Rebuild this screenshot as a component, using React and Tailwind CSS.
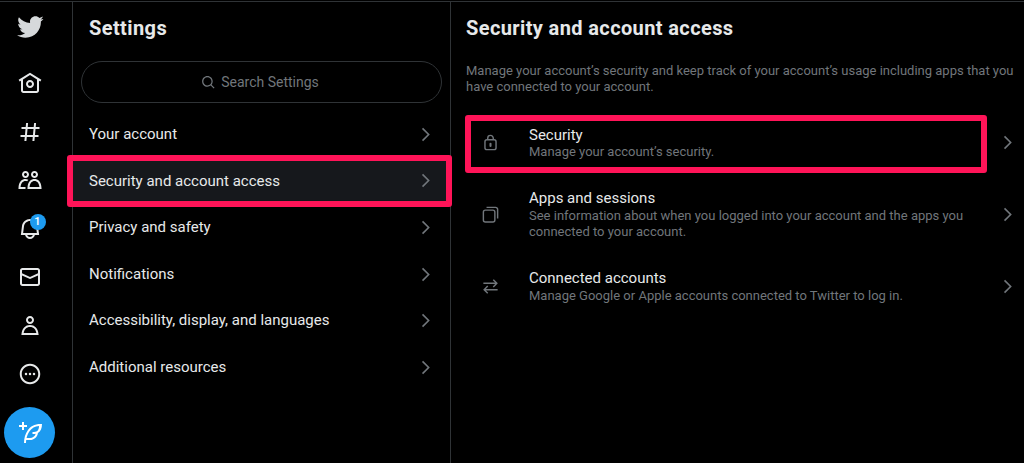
import React from "react";

const font = "font-['Roboto',sans-serif]";

const navIcons = [
  "M12 9c-2.209 0-4 1.791-4 4s1.791 4 4 4 4-1.791 4-4-1.791-4-4-4zm0 6c-1.105 0-2-.895-2-2s.895-2 2-2 2 .895 2 2-.895 2-2 2zm0-13.304L.622 8.807l1.06 1.696L3 9.679V19.5C3 20.881 4.119 22 5.5 22h13c1.381 0 2.5-1.119 2.5-2.5V9.679l1.318.824 1.06-1.696L12 1.696zM19 19.5c0 .276-.224.5-.5.5h-13c-.276 0-.5-.224-.5-.5V8.429l7-4.375 7 4.375V19.5z",
  "M10.09 3.098L9.72 7h5.99l.39-4.089 1.99.189L17.72 7h3.78v2h-3.97l-.56 6h3.53v2h-3.72l-.38 4.089-1.99-.189.36-3.9H8.78l-.38 4.089-1.99-.189L6.77 17H2.5v-2h4.46l.56-6H3.5V7h4.21l.39-4.089 1.99.187zM14.96 15l.56-6H9.53l-.56 6h5.99z",
  "M7.501 19.917L7.471 21H.472l.029-1.027c.184-6.618 3.736-8.977 7-8.977.963 0 1.95.212 2.87.672-.444.478-.851 1.03-1.212 1.656-.507-.204-1.054-.329-1.658-.329-2.767 0-4.57 2.223-4.938 6.004H7.56c-.023.302-.05.599-.059.917zm15.998.056L23.528 21H9.472l.029-1.027c.184-6.618 3.736-8.977 7-8.977s6.816 2.358 7 8.977zM21.437 19c-.367-3.781-2.17-6.004-4.938-6.004s-4.57 2.223-4.938 6.004h9.875zm-4.938-9c-.799 0-1.527-.279-2.116-.73-.836-.64-1.384-1.638-1.384-2.77 0-1.93 1.567-3.5 3.5-3.5s3.5 1.57 3.5 3.5c0 1.132-.548 2.13-1.384 2.77-.589.451-1.317.73-2.116.73zm-1.5-3.5c0 .827.673 1.5 1.5 1.5s1.5-.673 1.5-1.5-.673-1.5-1.5-1.5-1.5.673-1.5 1.5zM7.5 3C9.433 3 11 4.57 11 6.5S9.433 10 7.5 10 4 8.43 4 6.5 5.567 3 7.5 3zm0 2C6.673 5 6 5.673 6 6.5S6.673 8 7.5 8 9 7.327 9 6.5 8.327 5 7.5 5z",
  "M19.993 9.042C19.48 5.017 16.054 2 11.996 2s-7.49 3.021-7.999 7.051L2.866 18H7.1c.463 2.282 2.481 4 4.9 4s4.437-1.718 4.9-4h4.236l-1.143-8.958zM12 20c-1.306 0-2.417-.835-2.829-2h5.658c-.412 1.165-1.523 2-2.829 2zm-6.866-4l.847-6.698C6.364 6.272 8.941 4 11.996 4s5.627 2.268 6.013 5.295L18.864 16H5.134z",
  "M1.998 5.5c0-1.381 1.119-2.5 2.5-2.5h15c1.381 0 2.5 1.119 2.5 2.5v13c0 1.381-1.119 2.5-2.5 2.5h-15c-1.381 0-2.5-1.119-2.5-2.5v-13zm2.5-.5c-.276 0-.5.224-.5.5v2.764l8 3.638 8-3.636V5.5c0-.276-.224-.5-.5-.5h-15zm15.5 5.463l-8 3.636-8-3.638V18.5c0 .276.224.5.5.5h15c.276 0 .5-.224.5-.5v-8.037z",
  "M5.651 19h12.698c-.337-1.8-1.023-3.21-1.945-4.19C15.318 13.65 13.838 13 12 13s-3.317.65-4.404 1.81c-.922.98-1.608 2.39-1.945 4.19zm.486-5.56C7.627 11.85 9.648 11 12 11s4.373.85 5.863 2.44c1.477 1.58 2.366 3.8 2.632 6.46l.11 1.1H3.395l.11-1.1c.266-2.66 1.155-4.88 2.632-6.46zM12 4c-1.105 0-2 .9-2 2s.895 2 2 2 2-.9 2-2-.895-2-2-2zM8 6c0-2.21 1.791-4 4-4s4 1.79 4 4-1.791 4-4 4-4-1.79-4-4z",
  "M1.750 12c0-5.660 4.590-10.250 10.250-10.250S22.250 6.340 22.250 12 17.660 22.250 12 22.250 1.750 17.660 1.750 12zM12 3.750c-4.560 0-8.250 3.690-8.250 8.250s3.690 8.250 8.250 8.250 8.250-3.690 8.250-8.250S16.560 3.750 12 3.750zM6.750 12a1.250 1.250 0 1 0 2.500 0 1.250 1.250 0 1 0-2.500 0zm4 0a1.250 1.250 0 1 0 2.500 0 1.250 1.250 0 1 0-2.500 0zm4 0a1.250 1.250 0 1 0 2.500 0 1.250 1.250 0 1 0-2.500 0z",
];

const menu = [
  "Your account",
  "Security and account access",
  "Privacy and safety",
  "Notifications",
  "Accessibility, display, and languages",
  "Additional resources",
];

function Chevron({ className }) {
  return (
    <svg viewBox="0 0 24 24" className={className} fill="currentColor">
      <path d="M14.586 12L7.543 4.96l1.414-1.42L17.414 12l-8.457 8.46-1.414-1.42L14.586 12z" />
    </svg>
  );
}

function LockIcon() {
  return (
    <svg viewBox="0 0 24 24" className="w-[19px] h-[19px]" fill="none" stroke="currentColor" strokeWidth="1.8">
      <rect x="5" y="8.500" width="14" height="12.500" rx="2.500" />
      <path d="M8.500 8.500V6.500a3.500 3.500 0 0 1 7 0v2" />
      <path d="M12 13.500v3" strokeWidth="2.600" strokeLinecap="round" />
    </svg>
  );
}

function AppsIcon() {
  return (
    <svg viewBox="0 0 24 24" className="w-[19px] h-[19px]" fill="none" stroke="currentColor" strokeWidth="1.8">
      <rect x="3" y="6.500" width="14.500" height="15" rx="2.500" />
      <path d="M7 3h11.500A2.500 2.500 0 0 1 21 5.500V17" />
    </svg>
  );
}

function ArrowsIcon() {
  return (
    <svg viewBox="0 0 24 24" className="w-[19px] h-[19px]" fill="none" stroke="currentColor" strokeWidth="1.8">
      <path d="M3 8h17M15.500 3.500L20 8l-4.500 4.500" />
      <path d="M21 16H4M8.500 11.500L4 16l4.500 4.500" />
    </svg>
  );
}

const options = [
  {
    title: "Security",
    text: "Manage your account’s security.",
    icon: <LockIcon />,
    box: "pt-[10px] pb-[13px]",
    sub: "-mt-px",
  },
  {
    title: "Apps and sessions",
    text: "See information about when you logged into your account and the apps you connected to your account.",
    icon: <AppsIcon />,
    box: "pt-[15px] pb-[13px]",
    sub: "",
  },
  {
    title: "Connected accounts",
    text: "Manage Google or Apple accounts connected to Twitter to log in.",
    icon: <ArrowsIcon />,
    box: "pt-[15px] pb-[12px]",
    sub: "",
  },
];

export default function App() {
  return (
    <div className={`${font} w-[1024px] h-[463px] overflow-hidden bg-black pt-px text-[#e7e9ea]`}>
      <div className="flex h-full border-t border-[#2f3336]">
        <nav className="w-[73px] shrink-0 border-r border-[#2f3336] flex flex-col items-center pr-[13px]">
          <svg viewBox="0 0 24 24" className="w-[28px] h-[28px] mt-[11px] text-[#d6d9db]" fill="currentColor">
            <path d="M23.643 4.937c-.835.37-1.732.62-2.675.727.962-.576 1.7-1.49 2.048-2.578-.9.534-1.897.922-2.958 1.13-.85-.904-2.06-1.47-3.4-1.47-2.572 0-4.658 2.086-4.658 4.66 0 .364.042.718.12 1.06-3.873-.195-7.304-2.05-9.602-4.868-.4.69-.63 1.49-.63 2.342 0 1.616.823 3.043 2.072 3.878-.764-.025-1.482-.234-2.11-.583v.06c0 2.257 1.605 4.14 3.737 4.568-.392.106-.803.162-1.227.162-.3 0-.593-.028-.877-.082.593 1.85 2.313 3.198 4.352 3.234-1.595 1.25-3.604 1.995-5.786 1.995-.376 0-.747-.022-1.112-.065 2.062 1.323 4.51 2.093 7.14 2.093 8.57 0 13.255-7.098 13.255-13.254 0-.2-.005-.402-.014-.602.91-.658 1.7-1.477 2.323-2.41z" />
          </svg>
          <div className="flex flex-col gap-[24.500px] mt-[30px]">
            {navIcons.map((d, i) => (
              <div key={i} className="relative w-6 h-6">
                <svg viewBox="0 0 24 24" className="w-6 h-6 text-[#e7e9ea]" fill="currentColor">
                  <path d={d} />
                </svg>
                {i === 3 && (
                  <span className="absolute left-[12px] -top-[3px] w-4 h-4 rounded-full bg-[#1d9bf0] text-white text-[11px] leading-4 text-center font-medium">
                    1
                  </span>
                )}
              </div>
            ))}
          </div>
          <div className="mt-[21px] w-[51px] h-[51px] shrink-0 rounded-full bg-[#1d9bf0] flex items-center justify-center text-white">
            <svg viewBox="0 0 24 24" className="w-6 h-6" fill="currentColor">
              <path d="M23 3c-6.62-.1-10.38 2.421-13.05 6.03C7.29 12.61 6 17.331 6 22h2c0-1.007.07-2.012.19-3H12c4.1 0 7.48-3.082 7.94-7.054C22.79 10.147 23.94 7.359 24 3.001L23 3zm-7 8h-1.5v2H16c.63-.016 1.2-.08 1.72-.188C16.95 15.24 14.68 17 12 17H8.55c.57-2.512 1.57-4.851 3-6.78 2.16-2.912 5.29-4.911 9.45-5.187C20.95 8.079 19.9 11 16 11zM4 9V6H1V4h3V1h2v3h3v2H6v3H4z" />
            </svg>
          </div>
        </nav>

        <section className="w-[378px] shrink-0 border-r border-[#2f3336]">
          <h2 className="px-4 pt-[12px] text-[20px] leading-[28px] font-bold tracking-[0.4px]">Settings</h2>
          <div className="mx-2 mt-[19px] h-[42px] pr-[3px] rounded-full border border-[#2f3336] flex items-center justify-center gap-[5px] text-[#71767b] text-[14px]">
            <svg viewBox="0 0 24 24" className="w-[15px] h-[15px]" fill="currentColor">
              <path d="M10.25 3.75c-3.59 0-6.5 2.91-6.5 6.5s2.91 6.5 6.5 6.5c1.795 0 3.419-.726 4.596-1.904 1.178-1.177 1.904-2.801 1.904-4.596 0-3.59-2.91-6.5-6.5-6.5zm-8.500 6.500c0-4.694 3.806-8.500 8.500-8.500s8.500 3.806 8.500 8.500c0 1.986-.682 3.815-1.824 5.262l4.781 4.781-1.414 1.414-4.781-4.781c-1.447 1.142-3.276 1.824-5.262 1.824-4.694 0-8.500-3.806-8.500-8.500z" />
            </svg>
            <span>Search Settings</span>
          </div>
          <div className="mt-[8px]">
            {menu.map((label, i) => (
              <div
                key={label}
                className={`relative h-[46.600px] px-4 flex items-center justify-between text-[15px] ${i === 1 ? "bg-[#16181c]" : ""}`}
              >
                <span>{label}</span>
                <Chevron className="w-[19px] h-[19px] text-[#71767b] -mr-[1px]" />
                {i === 1 && (
                  <div className="absolute -left-[6px] -right-[2px] -top-[3px] -bottom-[3px] border-[6px] border-[#ff1458] rounded-[3px]" />
                )}
              </div>
            ))}
          </div>
        </section>

        <main className="flex-1 min-w-0">
          <h2 className="px-[15px] pt-[12px] text-[20px] leading-[28px] font-bold tracking-[0.38px]">Security and account access</h2>
          <p className="pl-[15px] pr-[6px] mt-[21px] text-[13px] leading-4 text-[#71767b]">
            Manage your account’s security and keep track of your account’s usage including apps that you have connected to your account.
          </p>
          <div className="mt-[20px]">
            {options.map((o, i) => (
              <div key={o.title} className={`relative flex items-center pl-[30px] pr-[7px] ${o.box}`}>
                <span className="w-[19px] shrink-0 text-[#71767b]">{o.icon}</span>
                <div className="ml-[29px] flex-1 min-w-0">
                  <div className="text-[15px] leading-5">{o.title}</div>
                  <div className={`text-[13px] leading-4 text-[#71767b] max-w-[460px] ${o.sub}`}>{o.text}</div>
                </div>
                <Chevron className="w-[19px] h-[19px] text-[#71767b] ml-2" />
                {i === 0 && (
                  <div className="absolute left-[14px] w-[522px] top-0 bottom-0 border-[6px] border-[#ff1458] rounded-[3px]" />
                )}
              </div>
            ))}
          </div>
        </main>
      </div>
    </div>
  );
}
